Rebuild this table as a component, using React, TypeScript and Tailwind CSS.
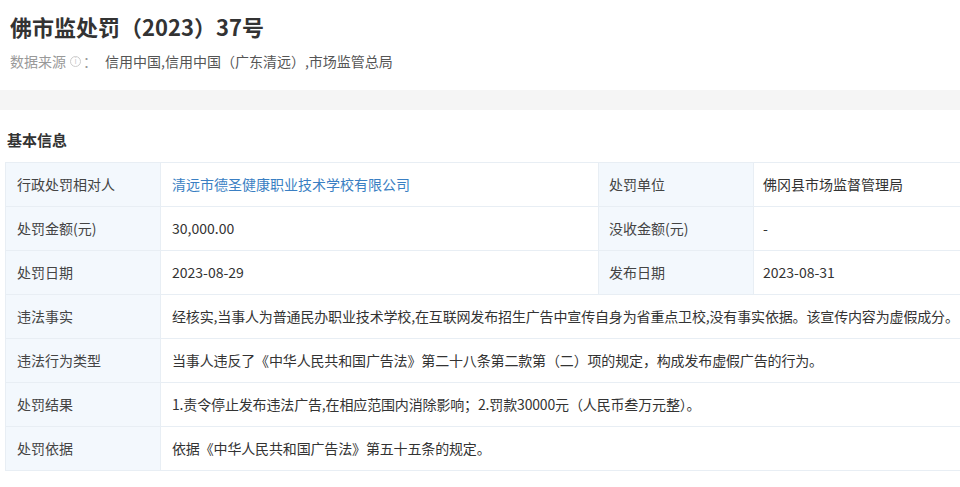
import React from "react";

const font = {
  fontFamily: '"Noto Sans CJK SC", "Noto Sans", sans-serif',
};

const rows: { label: string; value: React.ReactNode; label2?: string; value2?: string }[] = [
  {
    label: "行政处罚相对人",
    value: <span className="text-[#3a7fc3]">清远市德圣健康职业技术学校有限公司</span>,
    label2: "处罚单位",
    value2: "佛冈县市场监督管理局",
  },
  { label: "处罚金额(元)", value: "30,000.00", label2: "没收金额(元)", value2: "-" },
  { label: "处罚日期", value: "2023-08-29", label2: "发布日期", value2: "2023-08-31" },
  {
    label: "违法事实",
    value:
      "经核实,当事人为普通民办职业技术学校,在互联网发布招生广告中宣传自身为省重点卫校,没有事实依据。该宣传内容为虚假成分。",
  },
  {
    label: "违法行为类型",
    value: "当事人违反了《中华人民共和国广告法》第二十八条第二款第（二）项的规定，构成发布虚假广告的行为。",
  },
  {
    label: "处罚结果",
    value: "1.责令停止发布违法广告,在相应范围内消除影响；2.罚款30000元（人民币叁万元整）。",
  },
  { label: "处罚依据", value: "依据《中华人民共和国广告法》第五十五条的规定。" },
];

export default function App() {
  return (
    <div className="w-[960px] h-[487px] overflow-hidden bg-white text-[#333]" style={font}>
      {/* Header */}
      <div className="px-[10px] pt-[10px]">
        <h1 className="text-[22px] leading-[32px] font-bold text-[#333]">佛市监处罚（2023）37号</h1>
        <div className="mt-[8px] flex items-center text-[14px] leading-[22px]">
          <span className="text-[#999]">数据来源</span>
          <span className="ml-[4px] inline-flex h-[11px] w-[11px] items-center justify-center rounded-full border border-[#ccc] text-[8px] leading-none text-[#ccc]">
            i
          </span>
          <span className="ml-[2px] text-[#999]">：</span>
          <span className="ml-[8px] text-[#555]">信用中国,信用中国（广东清远）,市场监管总局</span>
        </div>
      </div>

      {/* Divider band */}
      <div className="mt-[18px] h-[20px] bg-[#f5f5f5]" />

      {/* Basic info */}
      <div className="pl-[5px] pt-[19px]">
        <h2 className="pl-[2px] text-[15px] leading-[22px] font-bold text-[#333]">基本信息</h2>
        <table className="mt-[11px] w-[980px] table-fixed border-collapse text-[14px] text-[#333]">
          <colgroup>
            <col className="w-[155px]" />
            <col className="w-[438px]" />
            <col className="w-[155px]" />
            <col />
          </colgroup>
          <tbody>
            {rows.map((r) => (
              <tr key={r.label} className="h-[44px]">
                <td className="border border-[#e8eef4] bg-[#f3f8fd] pl-[11px] text-[#444]">{r.label}</td>
                {r.label2 ? (
                  <>
                    <td className="border border-[#e8eef4] pl-[11px]">{r.value}</td>
                    <td className="border border-[#e8eef4] bg-[#f3f8fd] pl-[10px] text-[#444]">{r.label2}</td>
                    <td className="border border-[#e8eef4] pl-[9px]">{r.value2}</td>
                  </>
                ) : (
                  <td
                    colSpan={3}
                    className="whitespace-nowrap border border-[#e8eef4] pl-[11px] tracking-[-0.15px]"
                  >
                    {r.value}
                  </td>
                )}
              </tr>
            ))}
          </tbody>
        </table>
      </div>
    </div>
  );
}
